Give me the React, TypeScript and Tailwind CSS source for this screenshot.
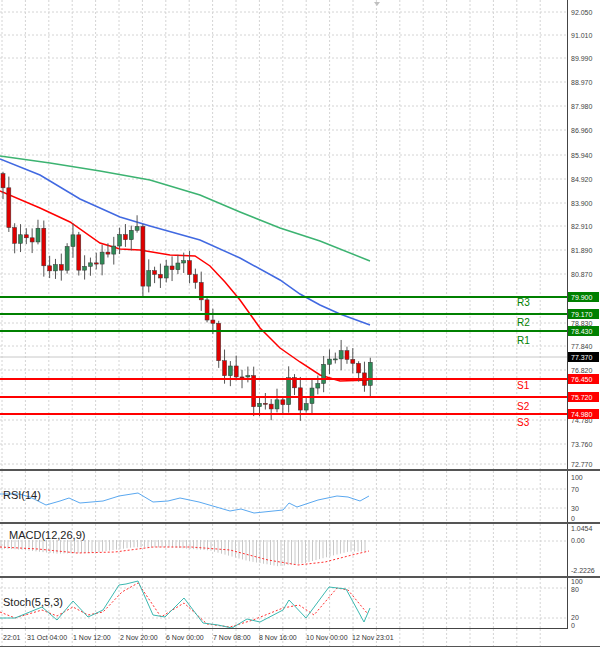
import React from "react";

type P = [number, number];
const pts = (a: P[]) => a.map(([x, y]) => `${x},${y}`).join(" ");
const interp = (a: P[], x: number) => {
  for (let i = 1; i < a.length; i++) {
    if (x <= a[i][0]) {
      const [x0, y0] = a[i - 1], [x1, y1] = a[i];
      return y0 + ((y1 - y0) * (x - x0)) / (x1 - x0 || 1);
    }
  }
  return a[a.length - 1][1];
};
const yp = (p: number) => 12 + (92.05 - p) * 23.6;

const closeKeys: P[] = [
  [3, 84.6], [10, 82.4], [20, 82.5], [30, 82.4], [38, 82.7], [45, 81.1], [52, 81.2], [60, 81.1], [68, 82.2], [75, 82.6],
  [80, 80.9], [90, 81.4], [100, 81.6], [108, 81.9], [118, 82.4], [130, 82.7], [137, 82.9], [143, 80.6], [150, 81.0],
  [160, 80.9], [170, 81.2], [180, 81.5], [190, 81.1], [198, 80.2], [205, 79.3], [212, 78.9], [218, 77.4], [225, 76.7],
  [232, 76.9], [240, 76.6], [248, 76.5], [255, 75.3], [265, 75.4], [275, 75.4], [283, 75.5], [290, 76.9], [297, 75.4],
  [305, 75.3], [312, 76.0], [320, 76.7], [328, 77.3], [335, 77.5], [345, 77.5], [352, 77.3], [358, 76.6], [365, 76.4], [372, 77.37],
];
const candles = (() => {
  const out: { x: number; o: number; c: number; h: number; l: number }[] = [];
  let prev = 85.2;
  for (let i = 0; i < 64; i++) {
    const x = 3 + i * 5.83;
    const c = interp(closeKeys, x) + Math.sin(i * 2.3) * 0.2;
    const o = prev;
    const h = Math.max(o, c) + 0.08 + Math.abs(Math.sin(i * 1.7)) * 0.4;
    const l = Math.min(o, c) - 0.08 - Math.abs(Math.cos(i * 1.3)) * 0.4;
    out.push({ x, o, c, h, l });
    prev = c;
  }
  return out;
})();

const red: P[] = [[0, 191], [40, 208], [70, 222], [100, 243], [120, 249], [140, 250], [170, 255], [195, 256], [210, 266], [225, 282], [240, 300], [260, 328], [280, 348], [300, 362], [320, 375], [340, 381], [370, 380]];
const blue: P[] = [[0, 159], [40, 175], [80, 199], [120, 217], [150, 226], [200, 240], [240, 258], [280, 280], [300, 294], [320, 305], [340, 314], [370, 325]];
const green: P[] = [[0, 156], [50, 163], [100, 171], [150, 180], [200, 195], [240, 212], [280, 228], [320, 241], [370, 261]];

const axisLabels: [string, number][] = [
  ["92.050", 12], ["91.010", 35], ["89.990", 58], ["88.970", 82], ["87.980", 106], ["86.960", 130], ["85.940", 155],
  ["84.920", 179], ["83.900", 203], ["82.910", 226], ["81.890", 250], ["80.870", 274], ["78.830", 323], ["77.840", 346],
  ["76.820", 370], ["74.780", 420], ["73.760", 444], ["72.770", 464],
];
const levels: { v: string; y: number; c: string; name: string; ly: number }[] = [
  { v: "79.900", y: 297, c: "#008000", name: "R3", ly: 306 },
  { v: "79.170", y: 314, c: "#008000", name: "R2", ly: 326 },
  { v: "78.430", y: 331, c: "#008000", name: "R1", ly: 344 },
  { v: "76.450", y: 379, c: "#ff0000", name: "S1", ly: 389 },
  { v: "75.720", y: 397, c: "#ff0000", name: "S2", ly: 410 },
  { v: "74.980", y: 414, c: "#ff0000", name: "S3", ly: 426 },
];
const vgrid = Array.from({ length: 24 }, (_, i) => 2 + i * 23.4).filter((x) => x < 567);
const font = { fontFamily: "'Liberation Sans', Arial, sans-serif" };

const Grid = ({ h, ys }: { h: number; ys: number[] }) => (
  <g stroke="#d4d4d4" strokeDasharray="2 2" strokeWidth={1}>
    {vgrid.map((x) => <line key={x} x1={x} x2={x} y1={0} y2={h} />)}
    {ys.map((y) => <line key={y} x1={0} x2={567} y1={y} y2={y} />)}
  </g>
);

const rsi: P[] = [[0, 494], [19, 494], [30, 497], [46, 505], [60, 501], [69, 498], [80, 503], [103, 501], [119, 496], [138, 493], [153, 502], [168, 501], [180, 498], [199, 502], [230, 511], [241, 509], [254, 513], [283, 510], [289, 503], [297, 507], [306, 504], [318, 500], [337, 496], [348, 497], [360, 501], [369, 496]];
const sig: P[] = [[0, 547], [38, 549], [77, 553], [115, 552], [153, 547], [191, 547], [230, 550], [268, 560], [298, 565], [325, 562], [352, 555], [369, 551]];
const stK: P[] = [[0, 618], [15, 618], [42, 607], [57, 620], [73, 601], [88, 617], [103, 610], [119, 585], [126, 584], [138, 581], [153, 615], [165, 617], [184, 598], [203, 623], [218, 625], [232, 628], [247, 619], [260, 622], [283, 610], [289, 600], [306, 618], [329, 587], [346, 589], [364, 622], [370, 608]];
const stD: P[] = [[0, 612], [15, 618], [42, 610], [57, 616], [73, 607], [88, 615], [103, 612], [122, 592], [138, 583], [161, 617], [184, 603], [207, 624], [230, 627], [253, 620], [283, 608], [299, 605], [314, 615], [337, 588], [348, 590], [367, 613]];
const shift = (a: P[], dy: number): P[] => a.map(([x, y]) => [x, y - dy]);

const dates: [string, number][] = [["22:01", 3], ["31 Oct 04:00", 27], ["1 Nov 12:00", 73], ["2 Nov 20:00", 120], ["6 Nov 00:00", 166], ["7 Nov 08:00", 213], ["8 Nov 16:00", 259], ["10 Nov 00:00", 306], ["12 Nov 23:01", 352]];

export default function App() {
  return (
    <div className="w-[600px] h-[647px] bg-white flex flex-col overflow-hidden" style={font}>
      <svg width={600} height={469} className="block shrink-0">
        <Grid h={469} ys={axisLabels.map((a) => a[1])} />
        <line x1={0} x2={567} y1={357} y2={357} stroke="#c8c8c8" />
        <polygon points="374,2 380,2 377,6" fill="#c0c0c0" />
        <polyline points={pts(green)} fill="none" stroke="#3cb371" strokeWidth={1.5} />
        <polyline points={pts(blue)} fill="none" stroke="#4169e1" strokeWidth={1.5} />
        <polyline points={pts(red)} fill="none" stroke="#ff0000" strokeWidth={1.5} />
        {candles.map((k, i) => {
          const up = k.c >= k.o;
          const top = yp(Math.max(k.o, k.c)), bot = yp(Math.min(k.o, k.c));
          return (
            <g key={i}>
              <line x1={k.x} x2={k.x} y1={yp(k.h)} y2={yp(k.l)} stroke="#555" />
              <rect x={k.x - 2} y={top} width={4} height={Math.max(1, bot - top)} fill={up ? "#2e8b57" : "#e00000"} stroke="#333" strokeWidth={0.5} />
            </g>
          );
        })}
        {levels.map((l) => (
          <g key={l.v}>
            <line x1={0} x2={567} y1={l.y} y2={l.y} stroke={l.c} strokeWidth={2} />
            <text x={517} y={l.ly} fontSize={10} fill={l.c}>{l.name}</text>
          </g>
        ))}
        <line x1={567.5} x2={567.5} y1={0} y2={469} stroke="#444" />
        {axisLabels.map(([t, y]) => (
          <text key={t} x={571} y={y + 3} fontSize={7} fill="#444">{t}</text>
        ))}
        {levels.map((l) => (
          <g key={"b" + l.v}>
            <rect x={568} y={l.y - 5} width={31} height={10} fill={l.c} />
            <text x={571} y={l.y + 3} fontSize={7} fill="#fff">{l.v}</text>
          </g>
        ))}
        <rect x={568} y={352} width={31} height={10} fill="#000" />
        <text x={571} y={360} fontSize={7} fill="#fff">77.370</text>
      </svg>
      <div className="h-[2px] bg-[#555] shrink-0" />
      <svg width={600} height={51} className="block shrink-0">
        <Grid h={51} ys={[18, 37]} />
        <polyline points={pts(shift(rsi, 471))} fill="none" stroke="#5aa8f0" strokeWidth={1} />
        <text x={3} y={28} fontSize={11} fill="#222">RSI(14)</text>
        <line x1={567.5} x2={567.5} y1={0} y2={51} stroke="#444" />
        {[["100", 6], ["70", 18], ["30", 37], ["0", 47]].map(([t, y]) => (
          <text key={t} x={571} y={(y as number) + 3} fontSize={7} fill="#444">{t}</text>
        ))}
      </svg>
      <div className="h-[2px] bg-[#555] shrink-0" />
      <svg width={600} height={52} className="block shrink-0">
        <Grid h={52} ys={[17]} />
        {Array.from({ length: 105 }, (_, i) => {
          const x = 1 + i * 3.5;
          const v = interp(sig, x + 20) - 540;
          return <line key={i} x1={x} x2={x} y1={16} y2={16 + v * 1.05} stroke="#c8c8c8" />;
        })}
        <polyline points={pts(shift(sig, 524))} fill="none" stroke="#ff3030" strokeWidth={1} strokeDasharray="2 2" />
        <text x={9} y={15} fontSize={11} fill="#222">MACD(12,26,9)</text>
        <line x1={567.5} x2={567.5} y1={0} y2={52} stroke="#444" />
        <text x={571} y={7} fontSize={7} fill="#444">1.0454</text>
        <text x={571} y={19} fontSize={7} fill="#444">0.00</text>
        <text x={571} y={49} fontSize={7} fill="#444">-2.2226</text>
      </svg>
      <div className="h-[2px] bg-[#555] shrink-0" />
      <svg width={600} height={51} className="block shrink-0">
        <Grid h={51} ys={[10, 40]} />
        <polyline points={pts(shift(stD, 578))} fill="none" stroke="#ff3030" strokeWidth={1} strokeDasharray="2 2" />
        <polyline points={pts(shift(stK, 578))} fill="none" stroke="#3cb8b0" strokeWidth={1} />
        <text x={3} y={28} fontSize={11} fill="#222">Stoch(5,5,3)</text>
        <line x1={567.5} x2={567.5} y1={0} y2={51} stroke="#444" />
        <line x1={0} x2={568} y1={50.5} y2={50.5} stroke="#444" />
        {[["100", 3], ["80", 11], ["20", 39], ["0", 47]].map(([t, y]) => (
          <text key={t} x={571} y={(y as number) + 3} fontSize={7} fill="#444">{t}</text>
        ))}
      </svg>
      <svg width={600} height={17} className="block shrink-0">
        <Grid h={17} ys={[]} />
        {dates.map(([t, x]) => (
          <text key={t} x={x} y={11} fontSize={7} fill="#333">{t}</text>
        ))}
      </svg>
      <div className="h-[2px] bg-[#555] shrink-0" />
    </div>
  );
}
